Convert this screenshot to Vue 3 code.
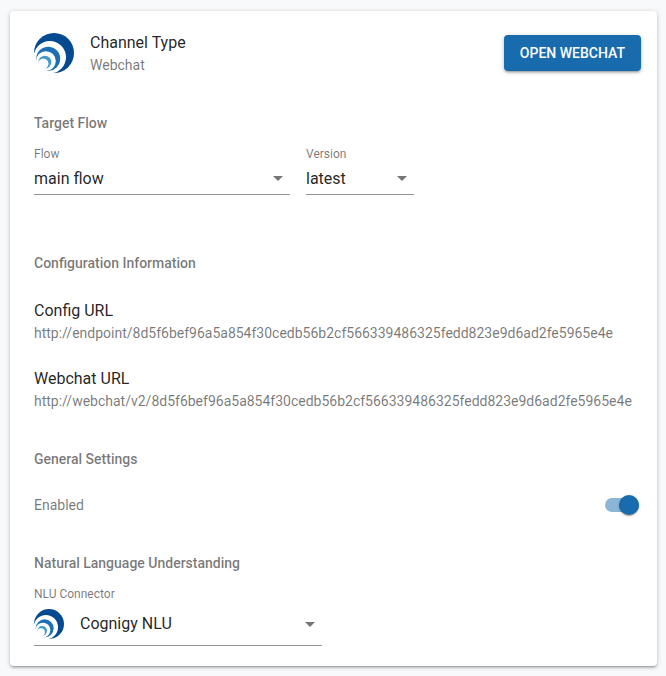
<script setup>
import { ref } from 'vue'

const flow = ref('main flow')
const version = ref('latest')
const connector = ref('Cognigy NLU')
const enabled = ref(true)

const urls = [
  {
    label: 'Config URL',
    value: 'http://endpoint/8d5f6bef96a5a854f30cedb56b2cf566339486325fedd823e9d6ad2fe5965e4e',
  },
  {
    label: 'Webchat URL',
    value: 'http://webchat/v2/8d5f6bef96a5a854f30cedb56b2cf566339486325fedd823e9d6ad2fe5965e4e',
  },
]

// nested circles that make up the swirl logo, outermost first
const rings = [
  { cx: 20, cy: 20, r: 20, fill: '#034a90' },
  { cx: 15.8, cy: 24.2, r: 16.2, fill: '#ffffff' },
  { cx: 14.2, cy: 25.8, r: 12, fill: '#1c6fb3' },
  { cx: 11.9, cy: 28.1, r: 9.9, fill: '#ffffff' },
  { cx: 10.9, cy: 29.1, r: 6.4, fill: '#3f98d0' },
  { cx: 9.3, cy: 30.7, r: 5.2, fill: '#ffffff' },
]
</script>

<template>
  <main class="card">
    <header class="header">
      <svg class="header__logo" viewBox="0 0 40 40" aria-hidden="true">
        <circle v-for="(ring, i) in rings" :key="i" v-bind="ring" />
      </svg>
      <div class="header__text">
        <h1 class="title">Channel Type</h1>
        <p class="text">Webchat</p>
      </div>
      <button class="button" type="button">OPEN WEBCHAT</button>
    </header>

    <section class="section">
      <h2 class="heading">Target Flow</h2>
      <div class="fields">
        <div class="field field--flow">
          <label class="field__label" for="flow">Flow</label>
          <div class="field__control">
            <select id="flow" v-model="flow" class="field__select">
              <option>main flow</option>
            </select>
            <svg class="field__arrow" viewBox="0 0 24 24" aria-hidden="true">
              <path d="M7 10l5 5 5-5z" />
            </svg>
          </div>
        </div>
        <div class="field field--version">
          <label class="field__label" for="version">Version</label>
          <div class="field__control">
            <select id="version" v-model="version" class="field__select">
              <option>latest</option>
            </select>
            <svg class="field__arrow" viewBox="0 0 24 24" aria-hidden="true">
              <path d="M7 10l5 5 5-5z" />
            </svg>
          </div>
        </div>
      </div>
    </section>

    <section class="section section--config">
      <h2 class="heading">Configuration Information</h2>
      <div class="urls">
        <div v-for="url in urls" :key="url.label">
          <h3 class="title">{{ url.label }}</h3>
          <p class="text text--url">{{ url.value }}</p>
        </div>
      </div>
    </section>

    <section class="section">
      <h2 class="heading">General Settings</h2>
      <div class="setting">
        <label class="text" for="enabled">Enabled</label>
        <input id="enabled" v-model="enabled" class="switch" type="checkbox" role="switch" />
      </div>
    </section>

    <section class="section">
      <h2 class="heading">Natural Language Understanding</h2>
      <div class="field field--nlu">
        <label class="field__label" for="connector">NLU Connector</label>
        <div class="field__control field__control--logo">
          <svg class="field__logo" viewBox="0 0 40 40" aria-hidden="true">
            <circle v-for="(ring, i) in rings" :key="i" v-bind="ring" />
          </svg>
          <select id="connector" v-model="connector" class="field__select">
            <option>Cognigy NLU</option>
          </select>
          <svg class="field__arrow" viewBox="0 0 24 24" aria-hidden="true">
            <path d="M7 10l5 5 5-5z" />
          </svg>
        </div>
      </div>
    </section>
  </main>
</template>

<style>
body {
  margin: 0;
  background-color: #f8f9fb;
}
</style>

<style scoped>
.card {
  box-sizing: border-box;
  margin: 11px 9px 10px 10px;
  padding: 20px 24px;
  border-radius: 4px;
  background-color: #ffffff;
  box-shadow:
    0 1px 5px rgba(0, 0, 0, 0.2),
    0 2px 2px rgba(0, 0, 0, 0.14),
    0 3px 1px -2px rgba(0, 0, 0, 0.12);
  color: rgba(0, 0, 0, 0.87);
  font-family: Roboto, 'Liberation Sans', sans-serif;
}

.header {
  display: flex;
  align-items: center;
  gap: 16px;
  margin-right: -8px;
}

.header__logo {
  flex-shrink: 0;
  width: 40px;
  height: 40px;
}

.header__text {
  flex: 1;
  min-width: 0;
}

.title {
  margin: 0;
  font-size: 16px;
  font-weight: 400;
  line-height: 24px;
}

.text {
  margin: 0;
  font-size: 14px;
  line-height: 20px;
  color: rgba(0, 0, 0, 0.54);
}

.text--url {
  overflow-wrap: anywhere;
}

.button {
  height: 36px;
  padding: 0 16px;
  border: 0;
  border-radius: 4px;
  background-color: #186cae;
  box-shadow:
    0 1px 5px rgba(0, 0, 0, 0.2),
    0 2px 2px rgba(0, 0, 0, 0.14),
    0 3px 1px -2px rgba(0, 0, 0, 0.12);
  color: #ffffff;
  font-family: inherit;
  font-size: 14px;
  font-weight: 500;
  line-height: 24px;
  cursor: pointer;
}

.heading {
  margin: 0;
  font-size: 14px;
  font-weight: 500;
  line-height: 20px;
  color: rgba(0, 0, 0, 0.54);
}

.section {
  margin-top: 38px;
}

.section--config {
  margin-top: 58px;
}

.fields {
  display: flex;
  gap: 16px;
}

.field {
  display: flex;
  flex-direction: column;
  margin-top: 13px;
}

.field--flow {
  width: 256px;
}

.field--version {
  width: 108px;
}

.field--nlu {
  width: 288px;
}

.field__label {
  font-size: 12px;
  line-height: 16px;
  color: rgba(0, 0, 0, 0.54);
}

.field__control {
  display: flex;
  align-items: center;
  height: 32px;
  border-bottom: 1px solid #949494;
}

.field__control--logo {
  height: 43px;
}

.field__logo {
  flex-shrink: 0;
  width: 30px;
  height: 30px;
  margin-right: 16px;
}

.field__select {
  flex: 1;
  min-width: 0;
  height: 32px;
  margin-right: -24px;
  padding: 0 24px 0 0;
  border: 0;
  background: transparent;
  appearance: none;
  color: inherit;
  font-family: inherit;
  font-size: 16px;
  cursor: pointer;
}

.field__arrow {
  flex-shrink: 0;
  width: 24px;
  height: 24px;
  fill: #757575;
  pointer-events: none;
}

.urls {
  display: flex;
  flex-direction: column;
  gap: 24px;
  margin-top: 26px;
}

.setting {
  display: flex;
  align-items: center;
  justify-content: space-between;
  margin: 26px -6px 0 0;
}

.switch {
  display: flex;
  align-items: center;
  width: 34px;
  height: 14px;
  margin: 0;
  border-radius: 7px;
  background-color: #9e9e9e;
  appearance: none;
  cursor: pointer;
}

.switch::before {
  content: '';
  width: 20px;
  height: 20px;
  flex-shrink: 0;
  border-radius: 50%;
  background-color: #fafafa;
  box-shadow:
    0 1px 3px rgba(0, 0, 0, 0.2),
    0 1px 1px rgba(0, 0, 0, 0.14),
    0 2px 1px -1px rgba(0, 0, 0, 0.12);
}

.switch:checked {
  justify-content: flex-end;
  background-color: #8cb6d7;
}

.switch:checked::before {
  background-color: #186cae;
}

@media (max-width: 480px) {
  .header,
  .fields {
    flex-wrap: wrap;
  }
}
</style>
